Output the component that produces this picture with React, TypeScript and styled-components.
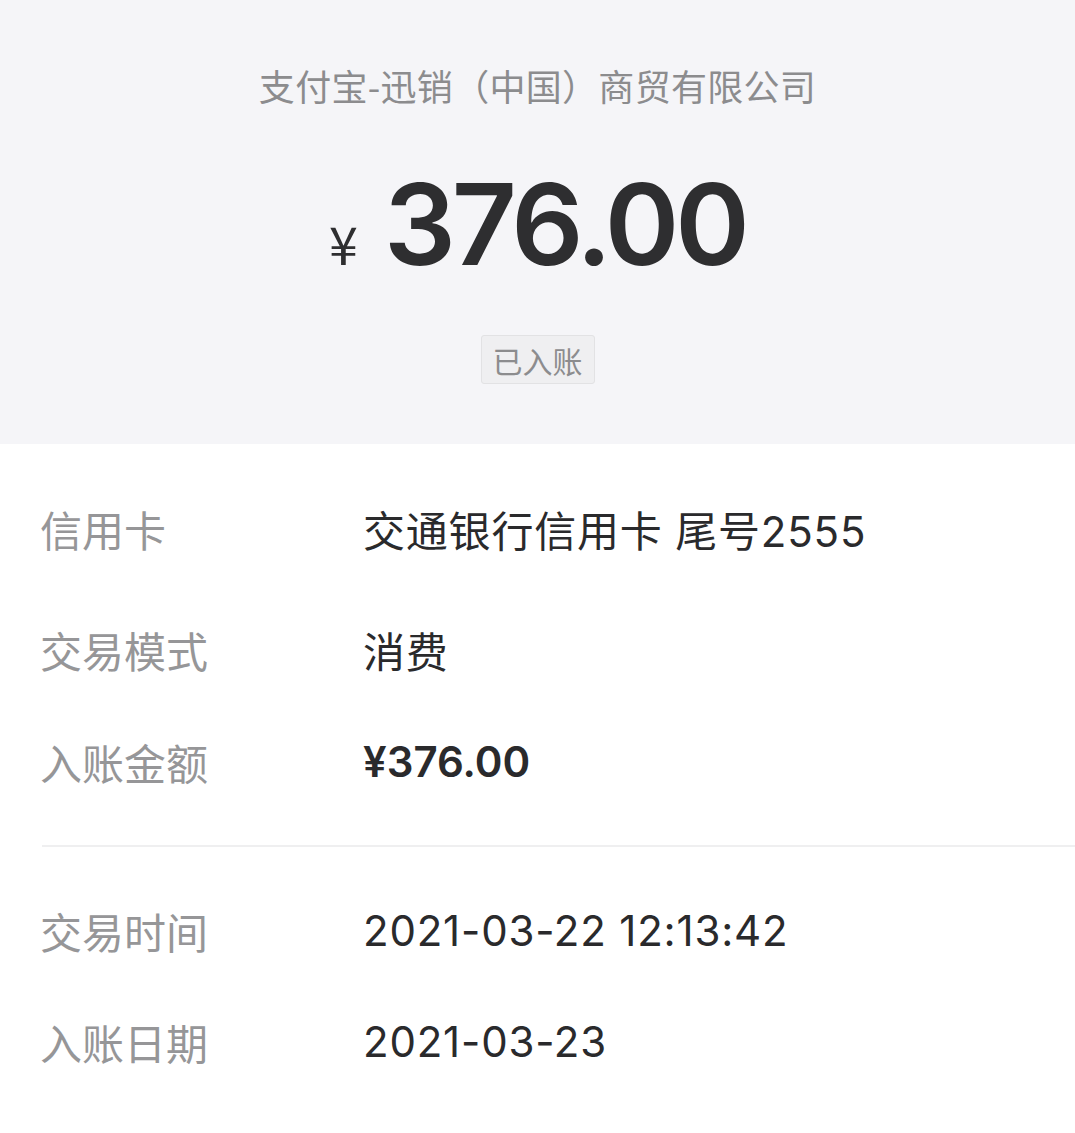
import React from 'react';
import styled, { createGlobalStyle } from 'styled-components';

const GlobalStyle = createGlobalStyle`
  html, body {
    margin: 0;
    padding: 0;
    background: #ffffff;
  }
  body {
    font-family: "Noto Sans CJK SC", "Noto Sans", sans-serif;
  }
`;

const Page = styled.div`
  width: 1075px;
  min-height: 1133px;
  background: #ffffff;
`;

const Header = styled.div`
  height: 444px;
  background: #f5f5f8;
  display: flex;
  flex-direction: column;
  align-items: center;
  box-sizing: border-box;
  padding-top: 58px;
`;

const Merchant = styled.div`
  font-size: 36px;
  line-height: 54px;
  color: #8c8c8e;
  letter-spacing: 0.3px;
`;

const AmountRow = styled.div`
  display: flex;
  align-items: baseline;
  margin-top: 54px;
  color: #2e2e30;
`;

const Yen = styled.span`
  font-family: "Noto Sans CJK SC", sans-serif;
  font-size: 52px;
  margin-right: 26px;
  font-weight: 400;
`;

const BigAmount = styled.span`
  font-family: "Inter", "Noto Sans", sans-serif;
  font-size: 113px;
  font-weight: 600;
  line-height: 116px;
  letter-spacing: -4px;
`;

const Badge = styled.div`
  margin-top: 53px;
  padding: 0 11px;
  height: 47px;
  display: flex;
  align-items: center;
  background: #efeff1;
  border: 1px solid #e2e2e4;
  border-radius: 3px;
  font-size: 30px;
  color: #8c8c8e;
`;

const Details = styled.div`
  padding: 0 0 0 40px;
`;

const Group = styled.div<{ $top: number }>`
  display: flex;
  flex-direction: column;
  padding-top: ${({ $top }) => $top}px;
`;

const Row = styled.div<{ $h: number }>`
  display: flex;
  align-items: center;
  height: ${({ $h }) => $h}px;
`;

const Label = styled.div`
  width: 323px;
  font-size: 42px;
  color: #969698;
`;

const Value = styled.div<{ $strong?: boolean }>`
  font-family: "Inter", "Noto Sans CJK SC", sans-serif;
  font-size: 42px;
  color: #2a2a2c;
  letter-spacing: ${({ $strong }) => ($strong ? 0 : 0.8)}px;
  font-weight: ${({ $strong }) => ($strong ? 600 : 400)};
`;

const Divider = styled.div<{ $top: number }>`
  height: 2px;
  background: #efeff0;
  margin: ${({ $top }) => $top}px 0 0 2px;
`;

export default function App() {
  return (
    <Page>
      <GlobalStyle />
      <Header>
        <Merchant>支付宝-迅销（中国）商贸有限公司</Merchant>
        <AmountRow>
          <Yen>¥</Yen>
          <BigAmount>376.00</BigAmount>
        </AmountRow>
        <Badge>已入账</Badge>
      </Header>
      <Details>
        <Group $top={28}>
          <Row $h={112}>
            <Label>信用卡</Label>
            <Value>交通银行信用卡 尾号2555</Value>
          </Row>
          <Row $h={130}>
            <Label>交易模式</Label>
            <Value>消费</Value>
          </Row>
          <Row $h={94}>
            <Label>入账金额</Label>
            <Value $strong>¥376.00</Value>
          </Row>
        </Group>
        <Divider $top={37} />
        <Group $top={27}>
          <Row $h={112}>
            <Label>交易时间</Label>
            <Value>2021-03-22 12:13:42</Value>
          </Row>
          <Row $h={110}>
            <Label>入账日期</Label>
            <Value>2021-03-23</Value>
          </Row>
        </Group>
      </Details>
    </Page>
  );
}
